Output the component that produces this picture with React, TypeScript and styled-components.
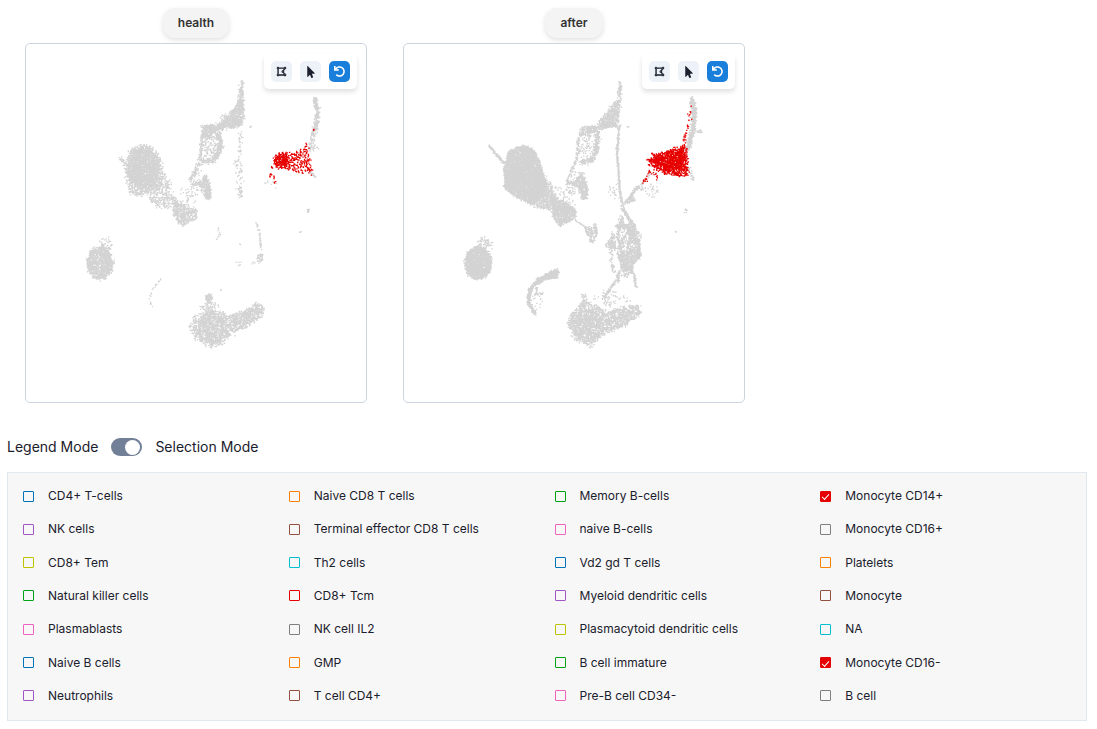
import React, { useMemo, useState } from "react";
import styled, { createGlobalStyle } from "styled-components";
import { FaDrawPolygon, FaMousePointer, FaUndo } from "react-icons/fa";

type Point = [number, number];
type Shape =
  | { kind: "area"; points: Point[]; density: number; fuzz?: number; selected?: boolean }
  | { kind: "oval"; center: Point; rx: number; ry: number; density: number; fuzz?: number; selected?: boolean }
  | { kind: "strand"; points: Point[]; width: number; count: number; selected?: boolean };

const area = (points: Point[], density: number, fuzz = 0.8, selected = false): Shape => ({ kind: "area", points, density, fuzz, selected });
const oval = (center: Point, rx: number, ry: number, density: number, fuzz = 0.8, selected = false): Shape => ({ kind: "oval", center, rx, ry, density, fuzz, selected });
const strand = (points: Point[], width: number, count: number, selected = false): Shape => ({ kind: "strand", points, width, count, selected });

const healthShapes: Shape[] = [
  area([[117, 100], [127, 105], [134, 115], [137, 126], [139, 133], [132, 144], [122, 148], [112, 153], [104, 148], [100, 136], [100, 119], [104, 107]], 0.8, 1.3),
  oval([117, 124], 15, 20, 1.4, 1.2),
  area([[134, 130], [144, 137], [146, 151], [152, 158], [146, 164], [131, 164], [119, 148]], 0.55, 1.3),
  area([[147, 154], [157, 159], [171, 167], [171, 174], [161, 179], [156, 182], [148, 173]], 1.1, 1),
  area([[147, 142], [166, 146], [172, 162], [160, 160]], 0.12, 1),
  strand([[94, 114], [100, 121]], 1.4, 25),
  oval([74, 219], 13, 16, 1.5, 1.2),
  oval([80, 200], 7, 7, 0.35, 1),
  area([[215, 37], [217, 37], [217, 59], [218, 73], [216, 81], [207, 84], [198, 83], [189, 85], [194, 79], [204, 69], [212, 59]], 1.6, 0.9),
  area([[193, 73], [204, 67], [208, 76], [194, 82]], 0.3, 1),
  area([[176, 82], [185, 81], [190, 85], [184, 93], [176, 93]], 2, 0.8),
  strand([[185, 84], [193, 84], [200, 81]], 4, 80),
  strand([[176, 91], [175, 109], [172, 121], [164, 136]], 1.7, 140),
  strand([[191, 88], [195, 98], [193, 108], [187, 116], [176, 118]], 2.6, 280),
  area([[178, 94], [192, 90], [193, 110], [176, 116]], 0.3, 1),
  area([[179, 129], [184, 141], [185, 154], [180, 156], [176, 143], [169, 139], [176, 137]], 1.7, 0.8),
  area([[163, 132], [173, 126], [178, 146], [160, 156]], 0.25, 1.2),
  strand([[215, 84], [214, 110], [215, 153]], 2.4, 60),
  oval([214, 149], 3, 5, 0.5, 1),
  oval([211, 123], 4, 16, 0.1, 1),
  strand([[224, 82], [225, 83]], 0.8, 4),
  strand([[289, 54], [291, 66], [291, 76], [287, 91]], 2.3, 260),
  strand([[287, 91], [285, 104]], 2.6, 45),
  oval([287, 104], 4, 4, 0.3, 1),
  strand([[283, 128], [288, 131], [292, 135]], 1.1, 26),
  oval([245, 142], 7, 6, 0.07, 1),
  oval([282, 167], 1, 2, 2, 0.4),
  oval([274, 188], 1, 1, 2, 0.2),
  area([[163, 283], [168, 273], [180, 266], [199, 269], [211, 273], [209, 287], [195, 301], [182, 303], [169, 294]], 0.7, 1.3),
  oval([186, 284], 15, 17, 0.6, 1.2),
  area([[205, 271], [218, 267], [231, 259], [238, 263], [237, 272], [224, 281], [210, 287]], 1.15, 1),
  oval([183, 254], 3, 4, 1.8, 0.8),
  oval([184, 262], 10, 5, 0.35, 1),
  strand([[135, 235], [127, 244], [123, 256], [126, 263]], 0.7, 24),
  strand([[230, 177], [233, 188], [235, 206]], 0.9, 46),
  oval([234, 214], 3, 5, 0.9, 0.8),
  strand([[230, 218], [226, 219]], 0.8, 4),
  strand([[192, 184], [194, 191], [190, 195]], 0.8, 11),
  strand([[209, 219], [216, 217], [213, 222]], 0.8, 6),
  strand([[214, 200], [215, 201]], 0.5, 2),
  strand([[195, 246], [196, 247]], 0.5, 2),
  area([[248, 113], [257, 108], [270, 108], [281, 100], [283, 109], [286, 131], [276, 130], [261, 126], [249, 122]], 0.4, 0.9, true),
  oval([255, 117], 7, 7, 1.1, 1.2, true),
  strand([[247, 119], [246, 128], [244, 134]], 1, 13, true),
  strand([[248, 130], [249, 141]], 1, 7, true),
  strand([[286, 84], [288, 86]], 0.8, 3, true),
];

const afterShapes: Shape[] = [
  area([[118, 101], [129, 105], [136, 118], [139, 129], [142, 140], [138, 154], [128, 160], [113, 154], [101, 145], [100, 123], [104, 108]], 2.4, 0.8),
  area([[138, 131], [146, 139], [152, 152], [150, 166], [134, 164], [124, 158]], 1.2, 1.1),
  area([[147, 150], [156, 156], [171, 164], [171, 174], [156, 182], [149, 174]], 2, 0.8),
  area([[150, 140], [163, 147], [172, 162], [158, 158]], 0.18, 1),
  strand([[85, 102], [100, 119]], 1.2, 90),
  oval([74, 219], 13, 16, 2.4, 1.1),
  oval([80, 201], 8, 8, 0.45, 1),
  strand([[153, 227], [144, 232], [133, 238]], 2.6, 320),
  strand([[133, 238], [126, 246], [124, 258], [131, 270]], 1.5, 300),
  area([[155, 225], [153, 234], [145, 235], [146, 230]], 2, 0.5),
  strand([[133, 243], [132, 251], [139, 249]], 1.3, 40),
  oval([132, 260], 7, 9, 0.08, 1),
  area([[216, 38], [217, 46], [216, 59], [214, 82], [206, 84], [189, 86], [199, 76], [206, 65], [213, 56]], 1.4, 1.1),
  area([[194, 75], [208, 63], [212, 83], [198, 84]], 0.4, 1.3),
  area([[177, 83], [190, 82], [198, 83], [185, 91], [176, 92]], 1.5, 0.8),
  strand([[216, 38], [215, 50]], 1.2, 40),
  strand([[175, 92], [173, 113], [163, 139]], 1.6, 120),
  strand([[193, 88], [193, 106], [188, 116], [176, 119]], 2.4, 270),
  area([[177, 94], [191, 90], [192, 111], [175, 117]], 0.25, 1),
  area([[179, 128], [184, 146], [184, 155], [178, 155], [174, 143], [164, 139], [172, 136]], 1.5, 0.9),
  area([[164, 130], [176, 127], [178, 148], [158, 151]], 0.25, 1.3),
  strand([[215, 82], [213, 109], [216, 149], [218, 159]], 0.9, 300),
  oval([210, 146], 6, 9, 0.12, 1),
  area([[217, 162], [228, 150], [231, 156], [223, 159]], 1.6, 0.7),
  strand([[226, 153], [234, 142], [238, 145]], 1.4, 75),
  strand([[236, 142], [241, 137], [248, 128]], 1.4, 30),
  oval([248, 147], 7, 8, 0.15, 1.2),
  strand([[287, 54], [290, 66], [289, 86], [283, 106]], 2.4, 470),
  strand([[284, 122], [289, 135]], 1.6, 32),
  oval([296, 88], 3, 2, 0.8, 0.8),
  oval([282, 167], 1, 2, 1.4, 0.6),
  oval([272, 188], 1, 1, 2, 0.2),
  strand([[223, 83], [224, 83]], 0.8, 4),
  strand([[171, 176], [183, 184]], 0.7, 26),
  area([[181, 183], [188, 184], [191, 179], [193, 189], [188, 199], [183, 191]], 0.9, 0.6),
  strand([[191, 179], [193, 189], [188, 199]], 0.8, 50),
  strand([[181, 183], [187, 199]], 0.8, 30),
  area([[213, 210], [233, 202], [237, 212], [229, 221], [228, 228], [218, 226]], 1.7, 0.9),
  strand([[218, 163], [224, 173], [231, 183]], 1.5, 140),
  area([[225, 181], [231, 182], [238, 194], [232, 200], [226, 199], [224, 190]], 1.1, 0.7),
  area([[209, 187], [211, 196], [213, 206], [201, 202], [206, 195]], 1.3, 0.7),
  strand([[218, 174], [213, 193], [218, 209]], 1, 90),
  strand([[217, 178], [228, 187], [223, 206]], 1, 90),
  strand([[213, 183], [222, 181], [230, 184]], 1.5, 70),
  strand([[213, 206], [221, 192], [226, 184]], 0.8, 60),
  strand([[234, 196], [236, 212]], 1.2, 90),
  area([[213, 183], [228, 180], [233, 200], [214, 208]], 0.4, 1),
  area([[214, 172], [220, 172], [220, 182], [213, 184]], 0.5, 1),
  strand([[207, 202], [207, 214], [210, 228]], 2, 50),
  strand([[215, 228], [213, 238]], 1.4, 40),
  strand([[212, 236], [200, 254]], 1.1, 90),
  strand([[230, 230], [232, 243]], 0.9, 50),
  strand([[228, 222], [228, 230]], 1, 30),
  oval([222, 230], 8, 4, 0.3, 1),
  oval([208, 255], 18, 8, 0.15, 1.5),
  area([[163, 280], [168, 269], [180, 258], [195, 263], [205, 269], [205, 287], [186, 303], [170, 296]], 0.9, 1.2),
  oval([184, 282], 15, 17, 0.5, 1.1),
  area([[203, 270], [213, 264], [235, 260], [237, 269], [224, 280], [206, 288]], 1.05, 1),
  strand([[181, 250], [180, 262]], 2.5, 34),
  area([[243, 117], [251, 111], [266, 106], [279, 101], [283, 105], [284, 132], [276, 132], [259, 129], [249, 124]], 1, 1, true),
  area([[246, 117], [264, 109], [279, 104], [280, 126], [262, 124]], 0.9, 0.7, true),
  strand([[286, 62], [285, 78], [279, 100]], 1.4, 30, true),
  strand([[246, 127], [240, 139]], 1.6, 16, true),
  oval([251, 132], 3, 5, 0.2, 1, true),
  strand([[248, 109], [249, 112]], 0.8, 5, true),
];

const makeRandom = (seed: number) => () => {
  seed = (seed + 0x6d2b79f5) | 0;
  let t = Math.imul(seed ^ (seed >>> 15), 1 | seed);
  t = (t + Math.imul(t ^ (t >>> 7), 61 | t)) ^ t;
  return ((t ^ (t >>> 14)) >>> 0) / 4294967296;
};

const contains = (polygon: Point[], x: number, y: number) => {
  let inside = false;
  for (let i = 0, j = polygon.length - 1; i < polygon.length; j = i++) {
    const [xi, yi] = polygon[i];
    const [xj, yj] = polygon[j];
    if (yi > y !== yj > y && x < ((xj - xi) * (y - yi)) / (yj - yi) + xi) inside = !inside;
  }
  return inside;
};

/* Turns the cluster shapes into two paths of small square dots: [other cells, selected cells]. */
const scatter = (shapes: Shape[], seed: number): [string, string] => {
  const random = makeRandom(seed);
  const normal = () => random() + random() + random() + random() - 2;
  const out: [string[], string[]] = [[], []];
  shapes.forEach((shape) => {
    const bucket = out[shape.selected ? 1 : 0];
    const dot = (x: number, y: number) => bucket.push(`M${(x - 0.6).toFixed(1)} ${(y - 0.6).toFixed(1)}h1.3v1.3h-1.3z`);
    if (shape.kind === "strand") {
      const lengths = shape.points.slice(1).map(([x, y], i) => Math.hypot(x - shape.points[i][0], y - shape.points[i][1]));
      const total = lengths.reduce((a, b) => a + b, 0);
      for (let n = 0; n < shape.count; n++) {
        let at = random() * total;
        let i = 0;
        while (i < lengths.length - 1 && at > lengths[i]) at -= lengths[i++];
        const [x0, y0] = shape.points[i];
        const [x1, y1] = shape.points[i + 1];
        const t = at / lengths[i];
        dot(x0 + (x1 - x0) * t + normal() * shape.width, y0 + (y1 - y0) * t + normal() * shape.width);
      }
      return;
    }
    const fuzz = (shape.fuzz ?? 1) * 1.5;
    const xs = shape.kind === "area" ? shape.points.map((p) => p[0]) : [shape.center[0] - shape.rx, shape.center[0] + shape.rx];
    const ys = shape.kind === "area" ? shape.points.map((p) => p[1]) : [shape.center[1] - shape.ry, shape.center[1] + shape.ry];
    const left = Math.min(...xs);
    const top = Math.min(...ys);
    const w = Math.max(...xs) - left;
    const h = Math.max(...ys) - top;
    const tries = Math.round(w * h * shape.density);
    for (let n = 0; n < tries; n++) {
      const x = left + random() * w;
      const y = top + random() * h;
      const hit =
        shape.kind === "area"
          ? contains(shape.points, x, y)
          : ((x - shape.center[0]) / shape.rx) ** 2 + ((y - shape.center[1]) / shape.ry) ** 2 <= 1;
      if (hit) dot(x + normal() * fuzz, y + normal() * fuzz);
    }
  });
  return [out[0].join(""), out[1].join("")];
};

const blue = "#0173b8", orange = "#ff7f00", green = "#00a316", red = "#e60000", purple = "#a256c5";
const brown = "#94503f", pink = "#f062c0", grey = "#7f7f7f", olive = "#bcc200", cyan = "#00bfd5";

const cellTypes: { name: string; color: string; on?: boolean }[] = [
  { name: "CD4+ T-cells", color: blue },
  { name: "Naive CD8 T cells", color: orange },
  { name: "Memory B-cells", color: green },
  { name: "Monocyte CD14+", color: red, on: true },
  { name: "NK cells", color: purple },
  { name: "Terminal effector CD8 T cells", color: brown },
  { name: "naive B-cells", color: pink },
  { name: "Monocyte CD16+", color: grey },
  { name: "CD8+ Tem", color: olive },
  { name: "Th2 cells", color: cyan },
  { name: "Vd2 gd T cells", color: blue },
  { name: "Platelets", color: orange },
  { name: "Natural killer cells", color: green },
  { name: "CD8+ Tcm", color: red },
  { name: "Myeloid dendritic cells", color: purple },
  { name: "Monocyte", color: brown },
  { name: "Plasmablasts", color: pink },
  { name: "NK cell IL2", color: grey },
  { name: "Plasmacytoid dendritic cells", color: olive },
  { name: "NA", color: cyan },
  { name: "Naive B cells", color: blue },
  { name: "GMP", color: orange },
  { name: "B cell immature", color: green },
  { name: "Monocyte CD16-", color: red, on: true },
  { name: "Neutrophils", color: purple },
  { name: "T cell CD4+", color: brown },
  { name: "Pre-B cell CD34-", color: pink },
  { name: "B cell", color: grey },
];

const GlobalStyle = createGlobalStyle`
  *, *::before, *::after { box-sizing: border-box; }
  body {
    margin: 0;
    background: #fff;
    color: #1a202c;
    font-family: Inter, "Liberation Sans", sans-serif;
    font-size: 12px;
    line-height: 20px;
  }
`;

const Page = styled.main`
  padding: 8px 10px 8px 7px;
`;

const Charts = styled.div`
  display: flex;
`;

const Chart = styled.section`
  flex: 0 0 35%;
  min-width: 0;
  padding: 0 18px;
  display: flex;
  flex-direction: column;
  align-items: center;
  gap: 5px;
`;

const ChartTitle = styled.h2`
  margin: 0;
  padding: 5px 15px;
  border-radius: 12px;
  background: #f4f4f4;
  color: #333;
  font-size: 12px;
  font-weight: 600;
  line-height: 20px;
  box-shadow: 0 2px 5px rgba(0, 0, 0, 0.12);
`;

const Plot = styled.div`
  position: relative;
  width: 100%;
  border: 1px solid #cbd5e0;
  border-radius: 5px;
  overflow: hidden;
`;

const Canvas = styled.svg`
  display: block;
  width: 100%;
  height: auto;
`;

const Toolbar = styled.div`
  position: absolute;
  top: 10px;
  right: 9px;
  display: flex;
  gap: 8px;
  padding: 7px;
  border-radius: 5px;
  background: #fff;
  box-shadow: 0 3px 5px rgba(0, 0, 0, 0.12);
`;

const ToolButton = styled.button<{ $primary?: boolean }>`
  display: grid;
  place-items: center;
  width: 21px;
  height: 21px;
  padding: 0;
  border: 0;
  border-radius: 5px;
  background: ${(p) => (p.$primary ? "#1a7fdb" : "#edf2f9")};
  color: ${(p) => (p.$primary ? "#fff" : "#1a202c")};
  font-size: 11px;
  cursor: pointer;
`;

const ModeRow = styled.div`
  display: flex;
  align-items: center;
  gap: 13px;
  margin: 34px 0 15px;
  font-size: 14px;
`;

const Switch = styled.input`
  appearance: none;
  display: flex;
  align-items: center;
  width: 31px;
  height: 18px;
  margin: 0;
  padding: 0 2px;
  border-radius: 9px;
  background: #718096;
  cursor: pointer;

  &::before {
    content: "";
    width: 15px;
    height: 15px;
    border-radius: 50%;
    background: #fff;
  }

  &:checked {
    justify-content: flex-end;
  }
`;

const Legend = styled.ul`
  display: grid;
  grid-template-columns: repeat(4, 1fr);
  align-content: space-between;
  min-height: 249px;
  margin: 0;
  padding: 13px 0 14px 15px;
  border: 1px solid #e2e8f0;
  background: #f7f7f7;
  list-style: none;
`;

const LegendItem = styled.label`
  display: flex;
  align-items: center;
  gap: 14px;
  cursor: pointer;
`;

const ColorBox = styled.input<{ $color: string }>`
  appearance: none;
  display: grid;
  place-items: center;
  flex: none;
  width: 11px;
  height: 11px;
  margin: 0;
  border: 1px solid ${(p) => p.$color};
  border-radius: 1px;
  cursor: pointer;

  &:checked {
    background: ${(p) => p.$color};
  }

  &:checked::before {
    content: "";
    width: 7px;
    height: 4px;
    border: solid #fff;
    border-width: 0 0 1px 1px;
    transform: rotate(-48deg);
  }
`;

const ScatterChart = ({ title, shapes, seed }: { title: string; shapes: Shape[]; seed: number }) => {
  const [others, selected] = useMemo(() => scatter(shapes, seed), [shapes, seed]);
  return (
    <Chart>
      <ChartTitle>{title}</ChartTitle>
      <Plot>
        <Canvas viewBox="0 0 340 358" role="img" aria-label={`${title} cells`}>
          <path d={others} fill="#d3d3d3" />
          <path d={selected} fill="#e60000" />
        </Canvas>
        <Toolbar>
          <ToolButton type="button" aria-label="Lasso select"><FaDrawPolygon /></ToolButton>
          <ToolButton type="button" aria-label="Pointer"><FaMousePointer size={12} /></ToolButton>
          <ToolButton type="button" aria-label="Reset" $primary><FaUndo /></ToolButton>
        </Toolbar>
      </Plot>
    </Chart>
  );
};

export default function App() {
  const [selectionMode, setSelectionMode] = useState(true);
  return (
    <>
      <GlobalStyle />
      <Page>
        <Charts>
          <ScatterChart title="health" shapes={healthShapes} seed={11} />
          <ScatterChart title="after" shapes={afterShapes} seed={29} />
        </Charts>
        <ModeRow>
          <span>Legend Mode</span>
          <Switch
            id="mode"
            type="checkbox"
            role="switch"
            checked={selectionMode}
            onChange={(e) => setSelectionMode(e.target.checked)}
          />
          <label htmlFor="mode">Selection Mode</label>
        </ModeRow>
        <Legend>
          {cellTypes.map((cell) => (
            <li key={cell.name}>
              <LegendItem>
                <ColorBox type="checkbox" defaultChecked={cell.on} $color={cell.color} />
                {cell.name}
              </LegendItem>
            </li>
          ))}
        </Legend>
      </Page>
    </>
  );
}
